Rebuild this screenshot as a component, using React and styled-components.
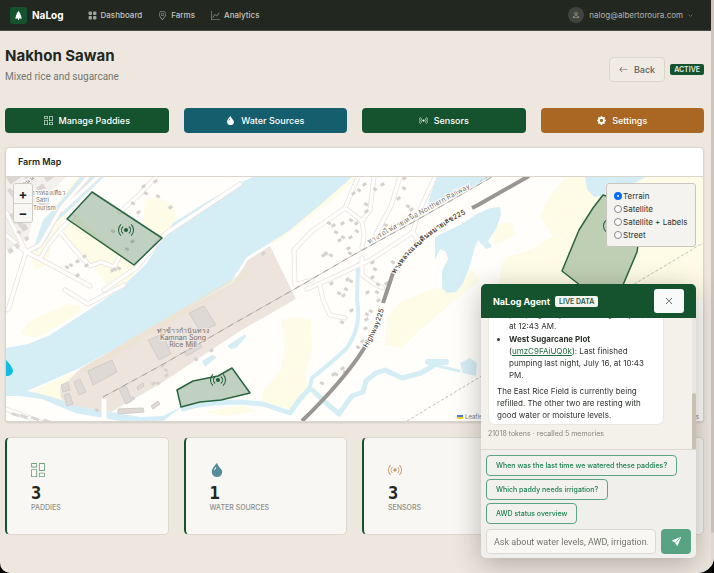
import React, { useEffect, useRef, useState } from "react";
import styled, { createGlobalStyle } from "styled-components";
import {
  BsArrowLeft,
  BsBroadcast,
  BsChevronDown,
  BsColumnsGap,
  BsDropletFill,
  BsGearFill,
  BsGeoAlt,
  BsGraphUp,
  BsGridFill,
  BsPerson,
  BsSendFill,
  BsTreeFill,
  BsXLg,
} from "react-icons/bs";

const GlobalStyle = createGlobalStyle`
  * {
    box-sizing: border-box;
  }
  body {
    margin: 0;
    background: #000;
    color: #22271f;
    font-family: Inter, "Noto Sans", sans-serif;
    font-size: 9px;
  }
  h1, h2, p, ul {
    margin: 0;
  }
  button, input {
    font-family: inherit;
  }
`;

const Page = styled.div`
  display: flex;
  min-height: 100vh;
  overflow: hidden;
  background: #eee7e0;
  border-radius: 0 0 16px 10px;
`;

const Content = styled.div`
  flex: 1;
  min-width: 0;
`;

const ScrollTrack = styled.div`
  width: 3px;
  background: #e6dfd7;
`;

const ScrollThumb = styled.div`
  height: 93vh;
  background: #cfc6bb;
  border-radius: 0 0 2px 2px;
`;

const Navbar = styled.nav`
  display: flex;
  align-items: center;
  height: 31px;
  padding: 0 18px 0 10px;
  background: #22271f;
  border-bottom: 1px solid #4a4e45;
`;

const Brand = styled.a`
  display: flex;
  align-items: center;
  gap: 5px;
  margin-right: 24px;
  color: #fff;
  font-size: 10px;
  font-weight: 700;
  text-decoration: none;
`;

const BrandIcon = styled.span`
  display: flex;
  align-items: center;
  justify-content: center;
  width: 17px;
  height: 17px;
  border-radius: 3px;
  background: #14532d;
`;

const NavLink = styled.a`
  display: flex;
  align-items: center;
  gap: 4px;
  margin-right: 16px;
  color: #c3c5c0;
  font-size: 8px;
  font-weight: 500;
  text-decoration: none;

  svg {
    opacity: 0.8;
  }
`;

const UserMenu = styled.button`
  display: flex;
  align-items: center;
  gap: 5px;
  margin-left: auto;
  padding: 0;
  border: 0;
  background: none;
  color: #b4b6b0;
  font-size: 8px;
`;

const Avatar = styled.span`
  display: flex;
  align-items: center;
  justify-content: center;
  width: 16px;
  height: 16px;
  border-radius: 50%;
  background: #41453e;
`;

const Main = styled.main`
  display: flex;
  flex-direction: column;
  padding: 14px 7px 0 5px;
`;

const Header = styled.header`
  display: flex;
  align-items: center;
  justify-content: space-between;
  margin-bottom: 14px;
`;

const Heading = styled.div`
  padding-bottom: 7px;
`;

const Title = styled.h1`
  font-size: 15px;
  font-weight: 700;
  line-height: 22px;
`;

const Subtitle = styled.p`
  color: #73766f;
  font-family: Roboto, sans-serif;
  font-size: 10px;
  line-height: 20px;
`;

const HeaderActions = styled.div`
  display: flex;
  align-items: center;
  gap: 5px;
`;

const BackButton = styled.button`
  display: flex;
  align-items: center;
  gap: 6px;
  height: 25px;
  padding: 0 9px;
  border: 1px solid #dcd5cc;
  border-radius: 4px;
  background: #f0ebe4;
  color: #5d6159;
  font-size: 9px;
  font-weight: 500;
`;

const Status = styled.span`
  padding: 0 4px;
  border-radius: 2px;
  background: #14532d;
  color: #e6eee8;
  font-size: 7px;
  font-weight: 600;
  line-height: 11px;
`;

const Columns = styled.div`
  display: grid;
  grid-template-columns: repeat(4, 1fr);
  gap: 15px;
`;

const ActionButton = styled.button`
  display: flex;
  align-items: center;
  justify-content: center;
  gap: 6px;
  height: 25px;
  padding: 0;
  border: 0;
  border-radius: 4px;
  background: ${(props) => props.$color};
  color: #fff;
  font-size: 9px;
  font-weight: 500;
`;

const MapCard = styled.section`
  margin: 14px 0 15px;
  border: 1px solid #dbd4cb;
  border-radius: 4px;
  overflow: hidden;
  background: #fff;
  box-shadow: 0 1px 2px rgba(0, 0, 0, 0.12);
`;

const CardTitle = styled.h2`
  padding: 0 12px;
  border-bottom: 1px solid #dbd4cb;
  font-size: 9px;
  font-weight: 600;
  line-height: 28px;
`;

const MapArea = styled.div`
  position: relative;
  height: 244px;
  background: #fffefb;

  > svg {
    display: block;
    width: 100%;
    height: 100%;
  }
`;

const ZoomControl = styled.div`
  position: absolute;
  top: 6px;
  left: 7px;
  border: 1px solid #cfcbc5;
  border-radius: 3px;
  overflow: hidden;
`;

const ZoomButton = styled.button`
  display: block;
  width: 18px;
  height: 19px;
  padding: 0;
  border: 0;
  background: #f8f7f3;
  color: #222;
  font-size: 13px;
  font-weight: 700;
  line-height: 18px;

  & + & {
    border-top: 1px solid #d5d2cc;
  }
`;

const LayerPanel = styled.fieldset`
  position: absolute;
  top: 6px;
  right: 7px;
  width: 90px;
  margin: 0;
  padding: 5px 7px;
  border: 1px solid #c9c6c1;
  border-radius: 3px;
  background: #f5f3f0;
`;

const LayerOption = styled.label`
  display: flex;
  align-items: center;
  gap: 1px;
  height: 13px;
  color: #2d322b;
  font-size: 8px;
  white-space: nowrap;
`;

const Radio = styled.input`
  appearance: none;
  flex: none;
  width: 8px;
  height: 8px;
  margin: 0;
  border: 1px solid #85858a;
  border-radius: 50%;
  background: #fff;

  &:checked {
    border: 3px solid #0a6cff;
  }
`;

const Attribution = styled.a`
  position: absolute;
  right: 4px;
  bottom: 0;
  width: 242px;
  display: flex;
  align-items: center;
  justify-content: space-between;
  background: rgba(255, 255, 255, 0.7);
  color: #77797a;
  font-size: 6px;
  line-height: 9px;
  text-decoration: none;

  span {
    display: flex;
    align-items: center;
    gap: 2px;
  }
`;

const StatCard = styled.article`
  display: flex;
  flex-direction: column;
  height: 98px;
  padding: 25px 24px;
  border: 1px solid #dcd7cf;
  border-left: 2px solid #14532d;
  border-radius: 5px;
  background: #f8f7f3;
`;

const StatIcon = styled.span`
  height: 15px;
  color: ${(props) => props.$color};
`;

const StatValue = styled.strong`
  margin-top: 5px;
  font-family: "DejaVu Sans Mono", monospace;
  font-size: 17px;
  line-height: 20px;
`;

const StatLabel = styled.span`
  color: #8c8e88;
  font-size: 7px;
  font-weight: 500;
  line-height: 9px;
`;

const Chat = styled.aside`
  position: fixed;
  right: 18px;
  bottom: 15px;
  width: 215px;
  border-radius: 5px;
  overflow: hidden;
  background: #f0efec;
  box-shadow: 0 6px 28px rgba(30, 25, 15, 0.3);
`;

const ChatHeader = styled.div`
  display: flex;
  align-items: center;
  gap: 5px;
  height: 34px;
  padding: 0 12px;
  background: #14532d;
`;

const ChatTitle = styled.h2`
  color: #fff;
  font-size: 9px;
  font-weight: 700;
`;

const LiveBadge = styled.span`
  padding: 0 4px;
  border-radius: 2px;
  background: #f3f5f1;
  color: #2c5a3e;
  font-size: 7px;
  font-weight: 600;
  line-height: 11px;
`;

const CloseButton = styled.button`
  display: flex;
  align-items: center;
  justify-content: center;
  width: 30px;
  height: 24px;
  margin-left: auto;
  padding: 0;
  border: 0;
  border-radius: 3px;
  background: #f8fafa;
  color: #2d322b;
`;

const ChatBody = styled.div`
  display: flex;
  height: 132px;
  background: #f4f1ea;
  border-bottom: 1px solid #dcd7cf;
`;

const Messages = styled.div`
  flex: 1;
  padding: 0 7px;
  overflow-y: auto;
  scrollbar-width: none;
`;

const ChatRail = styled.div`
  display: flex;
  align-items: flex-end;
  width: 4px;
  background: #ece6de;
`;

const ChatThumb = styled.div`
  width: 100%;
  height: 56px;
  border-radius: 2px 2px 0 0;
  background: #c9c0b4;
`;

const Bubble = styled.div`
  width: 176px;
  padding: 8px 8px 3px;
  border: 1px solid #ebe7e0;
  border-radius: 7px;
  background: #fff;
  color: #2d322b;
  font-size: 8px;
  line-height: 12px;

  ul {
    padding-left: 12px;
  }
  li {
    margin-bottom: 1px;
  }
  ul + p {
    margin-top: 4px;
  }
  a {
    color: #1f6b3f;
  }
`;

const Usage = styled.p`
  padding: 4px 0 11px;
  color: #85867f;
  font-size: 7px;
  line-height: 9px;
`;

const Suggestions = styled.div`
  display: flex;
  flex-direction: column;
  align-items: flex-start;
  gap: 3px;
  padding: 5px 5px 0;
`;

const Suggestion = styled.button`
  height: 21px;
  padding: 0 9px;
  border: 1px solid #5aa583;
  border-radius: 4px;
  background: #f2f1ee;
  color: #1e8050;
  font-size: 7px;
  font-weight: 500;
  white-space: nowrap;
`;

const Composer = styled.form`
  display: flex;
  gap: 5px;
  padding: 5px 5px 4px;
`;

const MessageInput = styled.input`
  flex: 1;
  min-width: 0;
  height: 25px;
  padding: 0 7px;
  border: 1px solid #dcd7cf;
  border-radius: 4px;
  background: #f8f7f3;
  font-family: Roboto, sans-serif;
  font-size: 9px;

  &::placeholder {
    color: #74776f;
  }
`;

const SendButton = styled.button`
  display: flex;
  align-items: center;
  justify-content: center;
  width: 30px;
  height: 25px;
  padding: 0;
  border: 0;
  border-radius: 4px;
  background: #58a381;
  color: #fff;
`;

const navItems = [
  { label: "Dashboard", icon: BsGridFill },
  { label: "Farms", icon: BsGeoAlt },
  { label: "Analytics", icon: BsGraphUp },
];

const actions = [
  { label: "Manage Paddies", icon: BsColumnsGap, color: "#14532d" },
  { label: "Water Sources", icon: BsDropletFill, color: "#155e6e" },
  { label: "Sensors", icon: BsBroadcast, color: "#14532d" },
  { label: "Settings", icon: BsGearFill, color: "#aa6724" },
];

const stats = [
  { label: "PADDIES", value: 3, icon: BsColumnsGap, color: "#6fa181" },
  { label: "WATER SOURCES", value: 1, icon: BsDropletFill, color: "#568c98" },
  { label: "SENSORS", value: 3, icon: BsBroadcast, color: "#c79a6a" },
  { label: "ALERTS", value: 0, icon: BsGearFill, color: "#aa6724" },
];

const layers = ["Terrain", "Satellite", "Satellite + Labels", "Street"];

const suggestions = [
  "When was the last time we watered these paddies?",
  "Which paddy needs irrigation?",
  "AWD status overview",
];

const paddies = [
  "92,192 162,238 134,265 67,219",
  "177,390 193,381 218,376 232,368 250,393 221,400 200,402 181,407",
  "603,195 593,208 579,230 562,271 590,293 620,292 637,252 640,232 640,206",
];

const markers = [
  [126, 230],
  [218, 380],
  [611, 226],
];

const fields = [
  "M92 177L72 205L55 235L40 268L32 264L34 245L45 220L76 177Z",
  "M145 200Q160 193 174 207L177 225L161 237L143 222Z",
  "M67 219L74 212L96 235L118 252L134 265L137 280L120 292L108 287L95 268L72 245L62 238Z",
  "M32 252L52 248L45 266L34 270Z",
  "M21 334L28 322L50 312L68 304L80 306L81 312L60 325L36 338Z",
  "M352 177L358 177L335 198L295 229L272 245L270 240Z",
  "M281 320Q296 315 311 320L312 350L305 375L310 395L292 410L262 402L262 392L280 372L285 345Z",
  "M385 345L387 318L400 302L430 290L458 283L472 270L480 280L455 300L420 330L402 348Z",
  "M565 177L703 177L703 300L520 300L498 285L504 258L530 250L552 236L540 215L550 195Z",
  "M492 226L512 222L516 235L495 245Z",
  "M29 392L82 369L110 412L63 405Z",
  "M205 412L225 408L245 406L255 411L225 416Z",
];

const waters = [
  "M80 177L104 177L77 203L56 222L48 238L36 252L35 244L43 220L60 202Z",
  "M6 348L28 344L50 335L84 313L120 289L146 264L173 223L208 201L252 177L352 177L320 205L290 230L270 243L247 257L230 283L180 312L80 368L27 391L45 395L75 404L105 411L140 417L163 416L183 406L163 421L120 421L75 413L42 399L20 396L6 396Z",
  "M202 361L212 355L217 357L205 367Z",
  "M227 346L245 334L246 337L236 348L231 349Z",
  "M437 177L490 177L462 193L426 211L430 196Z",
  "M435 237L441 234L460 225L477 214L490 208L500 207L501 215L496 229L488 241L492 247L486 249L478 240L475 247L470 265L463 283L456 292L447 293L442 288L442 271L448 259L446 252L440 249L435 260Z",
  "M585 177L646 177L632 184L610 187L602 196L594 197L587 189Z",
];

const minorRoads = [
  "M88 177L62 207L40 245L26 252L6 235M26 252L40 259L90 286M40 259L48 245L60 230L73 217",
  "M60 232L75 250L90 266L101 262L114 267L119 257",
  "M104 290L136 268L165 234L240 184",
  "M358 177L345 208L312 231L294 250L295 285L312 280M345 208L362 221L364 235L362 248",
  "M374 177L370 210L362 221M400 177L391 206L376 234",
  "M307 289L330 279L372 259L413 232M413 232L418 214L435 177M413 232L417 239",
  "M320 286L323 300L330 315L345 318M362 258L362 275L374 284L383 288",
  "M156 177L139 195L120 212M98 177L62 210",
  "M6 409L46 424M65 290L88 304L124 285M26 252L8 310M6 212L26 252",
];

const highway = "M529 176L478 205L450 219Q410 244 393 273L383 303Q375 332 363 350Q344 380 302 421";
const railway = "M103 397L160 366L240 320L293 290L355 254L417 220L492 177";

const buildings = [
  "88,371 112,360 117,372 93,385",
  "148,340 163,334 171,354 159,360",
  "189,313 204,306 216,325 200,331",
  "74,382 80,379 86,392 79,395",
  "61,385 68,382 70,390 63,392",
  "64,395 69,393 73,404 67,406",
  "119,389 126,386 132,401 126,404",
  "118,409 143,408 144,412 118,414",
  "151,406 158,401 160,404 153,409",
  "184,352 200,344 202,347 187,356",
  "137,387 143,383 144,386 138,390",
];

const blockBuildings = [
  [6, 178, 16, 8], [24, 178, 9, 8], [36, 188, 8, 6], [7, 190, 4, 12],
  [44, 178, 10, 5], [38, 203, 10, 7], [9, 215, 8, 11], [20, 227, 6, 6],
  [7, 250, 5, 5], [14, 245, 4, 5], [16, 222, 5, 7], [24, 238, 4, 4],
];

// small houses, x/y of each
const houses = [
  [141, 186], [145, 191], [153, 181], [157, 194], [168, 207], [132, 201], [136, 212],
  [112, 229], [130, 241], [126, 247], [82, 256], [70, 263], [75, 261],
  [66, 265], [75, 275], [114, 267], [110, 270], [118, 266], [84, 265], [18, 230],
  [351, 193], [358, 188], [362, 184], [374, 187], [380, 184], [365, 202], [402, 178],
  [403, 186], [396, 198], [407, 204], [409, 209], [328, 221], [331, 225], [335, 230],
  [340, 223], [350, 218], [354, 223], [356, 229], [348, 237], [342, 235], [337, 240],
  [325, 251], [321, 255], [330, 253], [346, 248], [349, 251], [364, 211], [385, 223],
  [370, 262], [374, 267], [370, 277], [377, 282], [384, 283], [392, 260], [345, 279],
  [350, 279], [329, 283], [338, 291], [341, 295], [345, 287], [349, 310], [341, 320],
  [365, 292], [376, 290], [376, 300], [366, 312], [364, 319], [370, 309], [363, 328],
  [357, 345], [360, 341], [321, 381], [331, 374], [335, 372], [340, 368], [344, 370],
  [261, 253], [132, 396], [160, 365], [165, 368], [151, 383], [157, 381], [164, 375],
  [195, 357], [209, 350], [96, 408],
];

const Terrain = () => (
  <svg viewBox="6 177 697 244" preserveAspectRatio="xMinYMin slice" aria-label="Farm map">
    <rect x="6" y="177" width="1400" height="600" fill="#fffefb" />
    <path d="M6 177H66L35 208L28 240L6 250Z" fill="#f4f0ed" />
    {fields.map((d) => (
      <path key={d} d={d} fill="#fefbe6" />
    ))}
    {waters.map((d) => (
      <path key={d} d={d} fill="#d5eef6" />
    ))}
    <g fill="none" stroke="#d5eef6" strokeLinecap="round" strokeLinejoin="round">
      <path d="M183 409Q205 402 240 402L263 404L290 413L300 399L310 388L325 402L339 414L346 404L352 396L363 392L366 381L376 373L385 370L402 378L421 373L436 364" strokeWidth="5" />
      <path d="M358 264L357 300Q362 328 346 349Q331 363 312 378L309 390" strokeWidth="4" />
      <path d="M428 362H446" strokeWidth="6" />
      <path d="M434 365L459 371" strokeWidth="3" />
    </g>
    <path d="M460 363L470 358L477 363L476 376L463 373Z" fill="#d5eef6" />
    <path d="M80 369L150 328L233 283L248 260L270 246L296 299L240 331L160 384L111 412L68 405L61 398L60 389Z" fill="#ede4de" />
    <path d="M80 369L247 270L250 275L86 373Z" fill="#ece3cf" opacity="0.6" />
    <g fill="#dfd9d6" stroke="#d2ccca" strokeWidth="1">
      {buildings.map((points) => (
        <polygon key={points} points={points} />
      ))}
    </g>
    <g fill="none" strokeLinecap="round" strokeLinejoin="round">
      {minorRoads.map((d) => (
        <path key={d} d={d} stroke="#e7e3e1" strokeWidth="5" />
      ))}
      {minorRoads.map((d) => (
        <path key={d} d={d} stroke="#fffefd" strokeWidth="3.4" />
      ))}
    </g>
    <g fill="#dcd6d3">
      {blockBuildings.map(([x, y, w, h]) => (
        <rect key={x + "-" + y} x={x} y={y} width={w} height={h} transform={`rotate(-35 ${x} ${y})`} />
      ))}
      {[12, 21, 33, 46].map((x) => (
        <rect key={x} x={x} y={412 + (x - 12) / 5} width="8" height="3" transform={`rotate(18 ${x} 412)`} />
      ))}
    </g>
    <g fill="#d6d1ce">
      {houses.map(([x, y], i) => (
        <rect key={i} x={x} y={y} width="4" height="3" transform={`rotate(${i % 2 ? 30 : -28} ${x} ${y})`} />
      ))}
    </g>
    <path d="M104 399V421" stroke="#fffefb" strokeWidth="5" />
    <path d={railway} fill="none" stroke="#cfc5c0" strokeWidth="1" />
    <path d={railway} fill="none" stroke="#aaa29d" strokeWidth="1" strokeDasharray="6 5" />
    <path d={highway} fill="none" stroke="#9a9693" strokeWidth="4" />
    <g fill="none" stroke="#c4c0ba" strokeWidth="1" strokeDasharray="3 2">
      <path d="M407 421L480 377L560 330L636 283L703 243" />
      <path d="M480 181L491 175" />
    </g>
    <path d="M395 270Q411 243 450 219L472 208M383 303Q377 327 365 347" fill="none" stroke="#fffefb" strokeWidth="5" />
    <defs>
      <path id="railway" d="M369 244L413 219L490 177" />
      <path id="highway-th" d="M395 274Q412 246 450 222L500 196" />
      <path id="highway-en" d="M367 348Q381 326 386 300L390 280" />
    </defs>
    <g fontFamily="Inter, 'Noto Sans', sans-serif" fontSize="7" fill="#77706b" stroke="#fffefb" strokeWidth="2" paintOrder="stroke">
      <text>
        <textPath href="#railway">ทางรถไฟสายเหนือ Northern Railway</textPath>
      </text>
      <text fill="#4d4946" fontWeight="600">
        <textPath href="#highway-th">ทางหลวงแผ่นดินหมายเลข225</textPath>
      </text>
      <text fill="#4d4946" fontWeight="500">
        <textPath href="#highway-en">Highway225</textPath>
      </text>
      <g stroke="#ede4de" textAnchor="middle">
        <text x="183" y="333">ท่าข้าวกำนันทรง</text>
        <text x="183" y="340">Kamnan Song</text>
        <text x="183" y="347">Rice Mill</text>
      </g>
      <g fontSize="6">
        <text x="31" y="195">การท่องเที่ยว</text>
        <text x="36" y="202">Satri</text>
        <text x="33" y="210">Tourism</text>
        <text x="24" y="186" transform="rotate(-35 24 186)">ถนน</text>
      </g>
    </g>
    <g fill="#2f6b3f" fillOpacity="0.3" stroke="#2a6542" strokeWidth="1.5">
      {paddies.map((points) => (
        <polygon key={points} points={points} strokeLinejoin="round" />
      ))}
    </g>
    {markers.map(([x, y]) => (
      <BsBroadcast key={x} x={x - 8} y={y - 8} size={16} color="#1d5b37" />
    ))}
    <path d="M6 360Q13 367 13 371A6 5 0 0 1 6 376Z" fill="#12bde3" />
  </svg>
);

export default function App() {
  const [layer, setLayer] = useState("Terrain");
  const [message, setMessage] = useState("");
  const [chatOpen, setChatOpen] = useState(true);
  const messagesRef = useRef(null);

  useEffect(() => {
    if (messagesRef.current) {
      messagesRef.current.scrollTop = messagesRef.current.scrollHeight;
    }
  }, [chatOpen]);

  const handleSubmit = (e) => {
    e.preventDefault();
    setMessage("");
  };

  return (
    <>
      <GlobalStyle />
      <Page>
        <Content>
          <Navbar>
            <Brand href="#">
              <BrandIcon>
                <BsTreeFill size={9} />
              </BrandIcon>
              NaLog
            </Brand>
            {navItems.map(({ label, icon: Icon }) => (
              <NavLink key={label} href="#">
                <Icon size={9} />
                {label}
              </NavLink>
            ))}
            <UserMenu type="button">
              <Avatar>
                <BsPerson size={8} />
              </Avatar>
              nalog@albertoroura.com
              <BsChevronDown size={5} />
            </UserMenu>
          </Navbar>
          <Main>
            <Header>
              <Heading>
                <Title>Nakhon Sawan</Title>
                <Subtitle>Mixed rice and sugarcane</Subtitle>
              </Heading>
              <HeaderActions>
                <BackButton type="button">
                  <BsArrowLeft size={9} />
                  Back
                </BackButton>
                <Status>ACTIVE</Status>
              </HeaderActions>
            </Header>
            <Columns>
              {actions.map(({ label, icon: Icon, color }) => (
                <ActionButton key={label} type="button" $color={color}>
                  <Icon size={9} />
                  {label}
                </ActionButton>
              ))}
            </Columns>
            <MapCard>
              <CardTitle>Farm Map</CardTitle>
              <MapArea>
                <Terrain />
                <ZoomControl>
                  <ZoomButton type="button" aria-label="Zoom in">+</ZoomButton>
                  <ZoomButton type="button" aria-label="Zoom out">−</ZoomButton>
                </ZoomControl>
                <LayerPanel>
                  {layers.map((name) => (
                    <LayerOption key={name}>
                      <Radio
                        type="radio"
                        name="layer"
                        value={name}
                        checked={layer === name}
                        onChange={(e) => setLayer(e.target.value)}
                      />
                      {name}
                    </LayerOption>
                  ))}
                </LayerPanel>
                <Attribution href="#">
                  <span>
                    <svg width="6" height="4" viewBox="0 0 6 4">
                      <rect width="6" height="2" fill="#4c7be1" />
                      <rect y="2" width="6" height="2" fill="#ffd500" />
                    </svg>
                    Leaflet
                  </span>
                  <span>OpenStreetMap contributors</span>
                </Attribution>
              </MapArea>
            </MapCard>
            <Columns>
              {stats.map(({ label, value, icon: Icon, color }) => (
                <StatCard key={label}>
                  <StatIcon $color={color}>
                    <Icon size={14} />
                  </StatIcon>
                  <StatValue>{value}</StatValue>
                  <StatLabel>{label}</StatLabel>
                </StatCard>
              ))}
            </Columns>
          </Main>
        </Content>
        <ScrollTrack>
          <ScrollThumb />
        </ScrollTrack>
      </Page>
      {chatOpen && (
        <Chat>
          <ChatHeader>
            <ChatTitle>NaLog Agent</ChatTitle>
            <LiveBadge>LIVE DATA</LiveBadge>
            <CloseButton type="button" aria-label="Close" onClick={() => setChatOpen(false)}>
              <BsXLg size={8} />
            </CloseButton>
          </ChatHeader>
          <ChatBody>
            <Messages ref={messagesRef}>
              <Bubble>
                <ul>
                  <li>
                    Last finished
                    <br />
                    pumping early this morning, July 17,
                    <br />
                    at 12:43 AM.
                  </li>
                  <li>
                    <strong>West Sugarcane Plot</strong> (<a href="#">umzC9FAiUQ0k</a>):
                    Last finished pumping last night, July 16, at 10:43 PM.
                  </li>
                </ul>
                <p>
                  The East Rice Field is currently being refilled. The other two
                  are resting with good water or moisture levels.
                </p>
              </Bubble>
              <Usage>21018 tokens · recalled 5 memories</Usage>
            </Messages>
            <ChatRail>
              <ChatThumb />
            </ChatRail>
          </ChatBody>
          <Suggestions>
            {suggestions.map((text) => (
              <Suggestion key={text} type="button" onClick={() => setMessage(text)}>
                {text}
              </Suggestion>
            ))}
          </Suggestions>
          <Composer onSubmit={handleSubmit}>
            <MessageInput
              aria-label="Message"
              placeholder="Ask about water levels, AWD, irrigation..."
              value={message}
              onChange={(e) => setMessage(e.target.value)}
            />
            <SendButton type="submit" aria-label="Send">
              <BsSendFill size={9} />
            </SendButton>
          </Composer>
        </Chat>
      )}
    </>
  );
}
